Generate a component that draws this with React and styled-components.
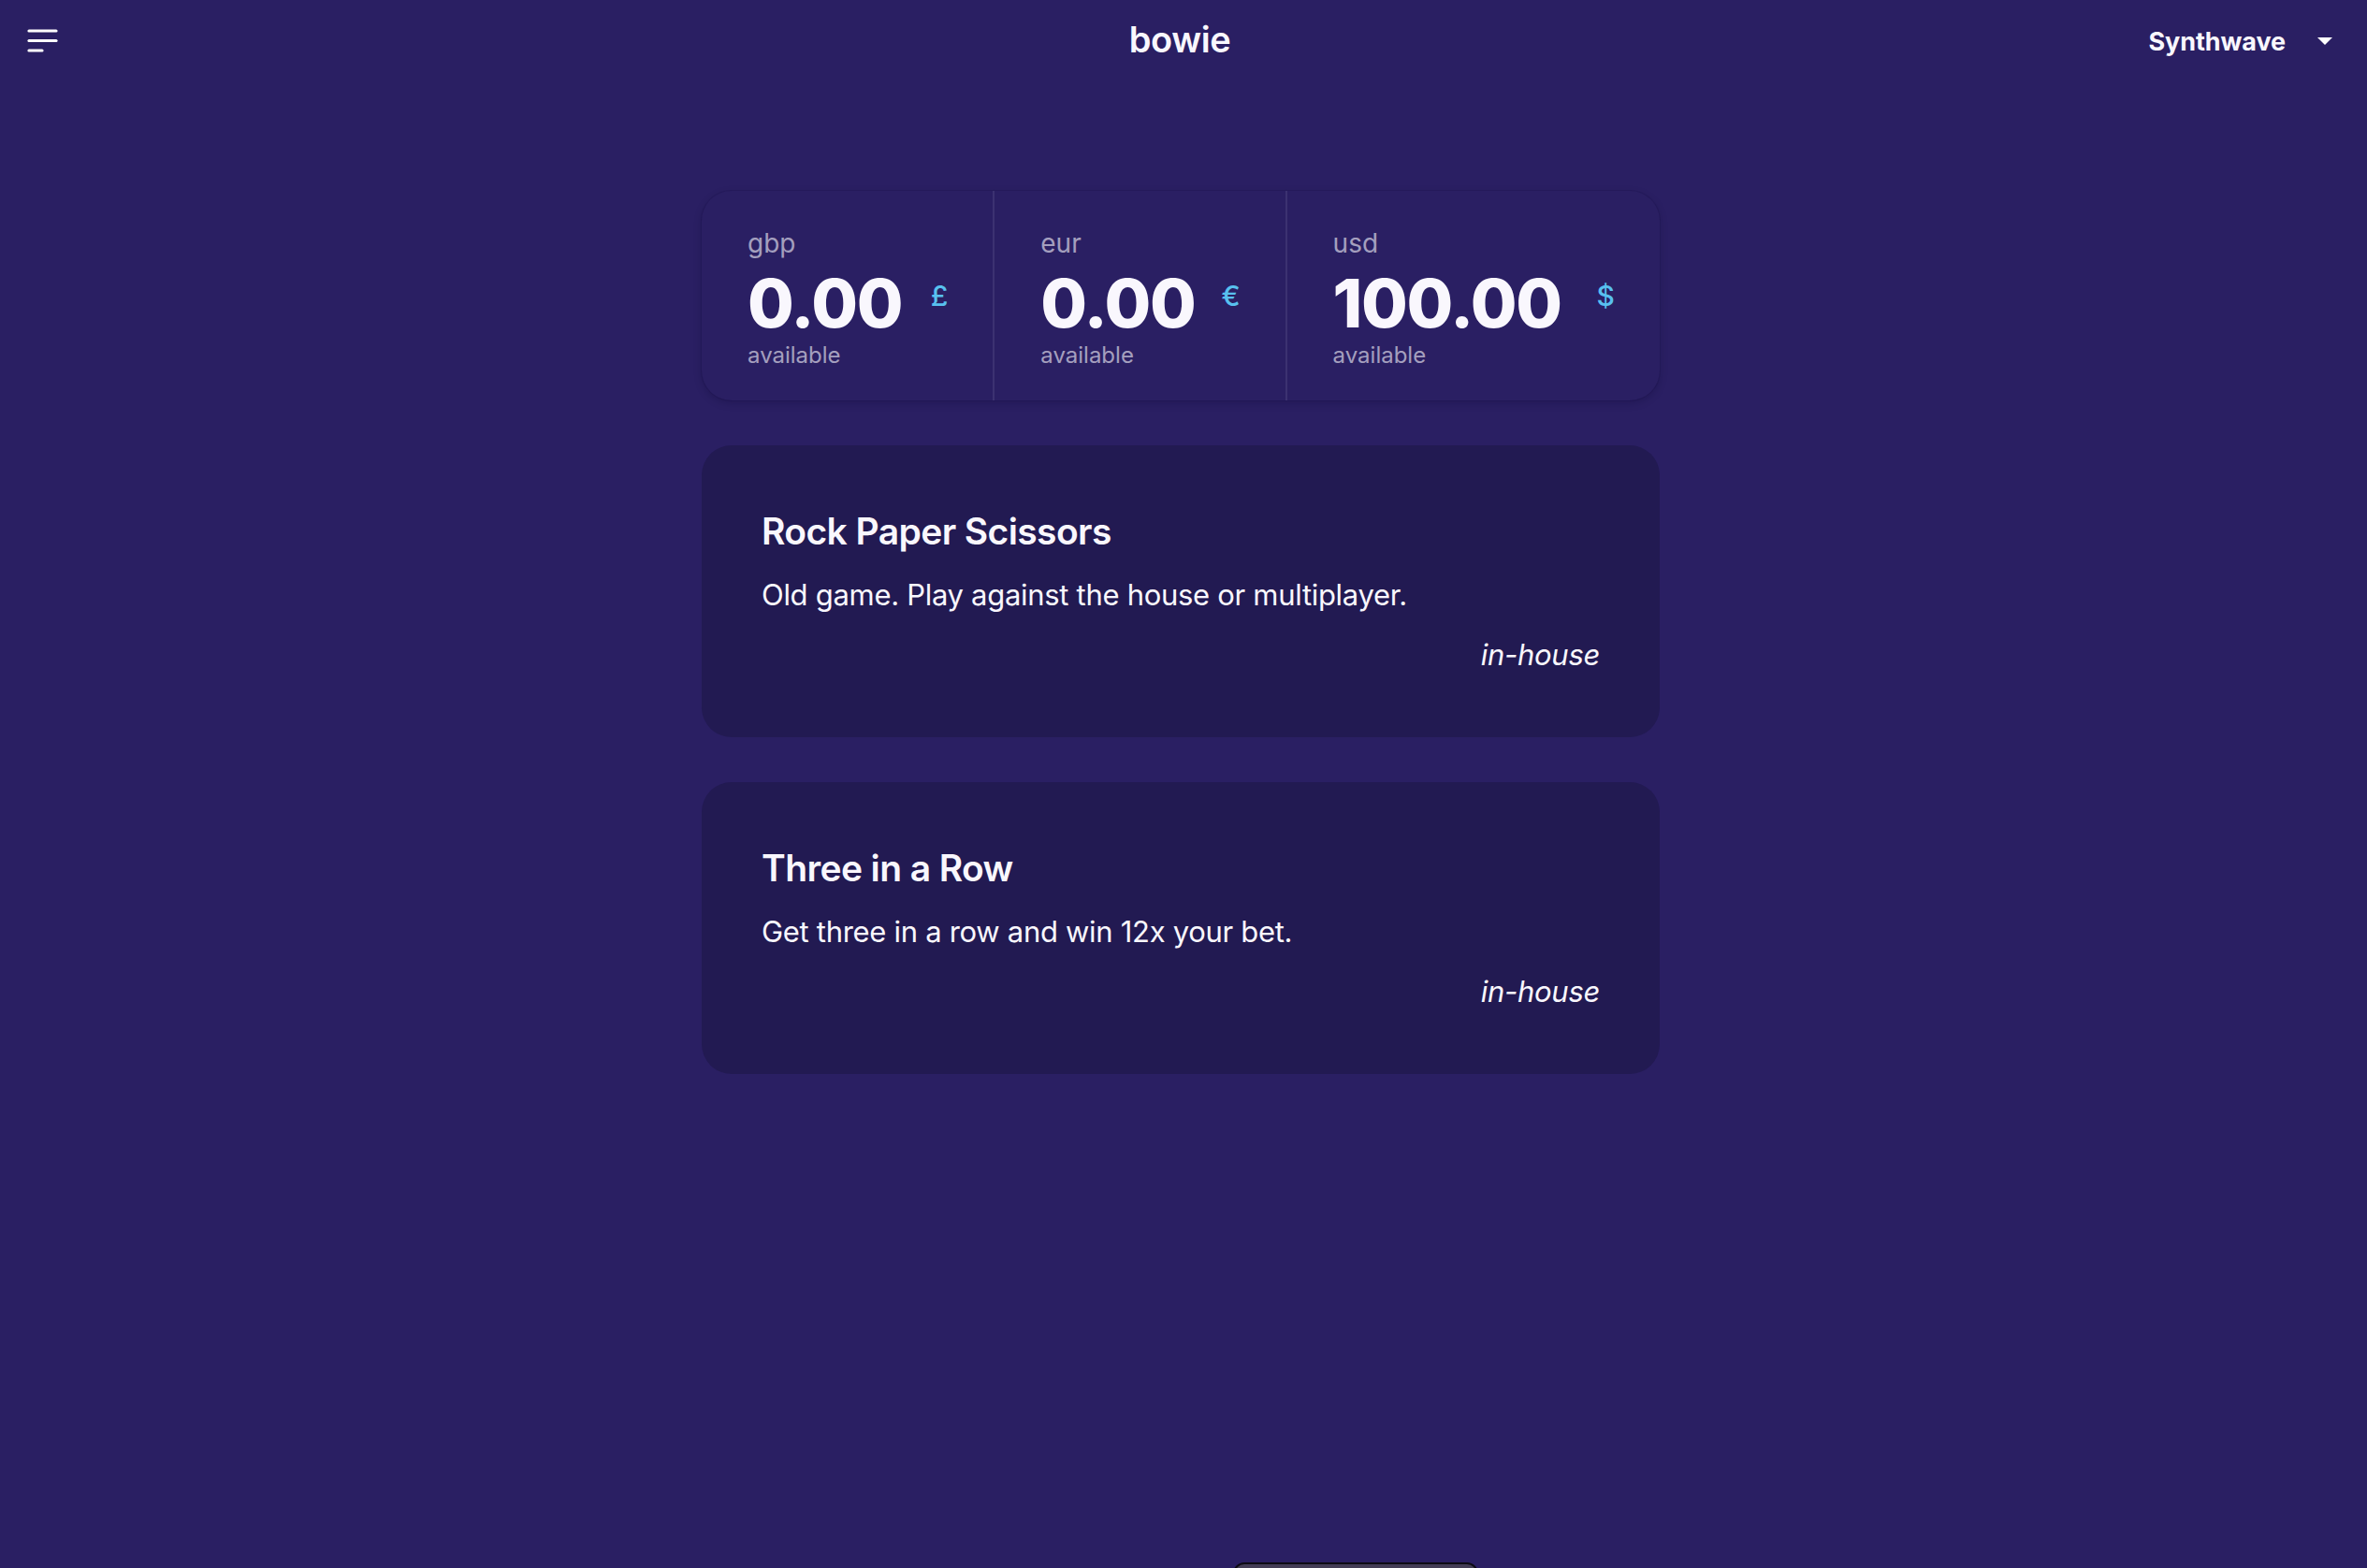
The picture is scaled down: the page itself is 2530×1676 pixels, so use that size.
import React from 'react';
import styled, { createGlobalStyle } from 'styled-components';

const GlobalStyle = createGlobalStyle`
  html, body {
    margin: 0;
    padding: 0;
    background: #2a1f63;
  }
  body {
    font-family: Inter, "Noto Sans", "Liberation Sans", sans-serif;
    color: #f9f7fd;
    min-height: 100vh;
  }
`;

const Page = styled.div`
  min-height: 100vh;
  background: #2a1f63;
`;

const Navbar = styled.header`
  display: flex;
  align-items: center;
  height: 88px;
  padding: 0 37px 0 29px;
`;

const NavSide = styled.div`
  flex: 1;
  display: flex;
  align-items: center;
  justify-content: ${(p) => (p.$end ? 'flex-end' : 'flex-start')};
`;

const MenuButton = styled.button`
  display: flex;
  align-items: center;
  background: none;
  border: none;
  padding: 0;
  cursor: pointer;
`;

const Brand = styled.div`
  font-size: 38px;
  font-weight: 600;
  letter-spacing: -0.4px;
  line-height: 1;
  margin-top: -4px;
`;

const ThemeSelect = styled.div`
  display: flex;
  align-items: center;
  gap: 34px;
  font-size: 27px;
  font-weight: 700;
  letter-spacing: -0.1px;
  cursor: pointer;
`;

const Main = styled.main`
  width: 1024px;
  margin: 116px 0 0 calc(50% - 515px);
  display: flex;
  flex-direction: column;
  gap: 48px;
`;

const Stats = styled.section`
  display: grid;
  grid-template-columns: minmax(0, 311fr) minmax(0, 312fr) minmax(0, 400fr);
  border-radius: 32px;
  box-shadow: 0 3px 8px rgba(10, 5, 40, 0.22), 0 0 0 1px rgba(20, 12, 60, 0.12);
`;

const Stat = styled.div`
  display: grid;
  grid-template-columns: 1fr auto;
  column-gap: 24px;
  padding: 32px 48px 32px 49px;
  border-left: ${(p) => (p.$first ? 'none' : '2px solid rgba(249, 247, 253, 0.09)')};
`;

const StatTitle = styled.div`
  grid-column: 1;
  font-size: 28px;
  line-height: 48px;
  color: rgba(249, 247, 253, 0.6);
`;

const StatValue = styled.div`
  grid-column: 1;
  font-size: 72px;
  line-height: 80px;
  font-weight: 800;
  letter-spacing: -1.3px;
  color: #f9f7fd;
  white-space: nowrap;
`;

const StatDesc = styled.div`
  grid-column: 1;
  font-size: 24px;
  line-height: 32px;
  color: rgba(249, 247, 253, 0.6);
`;

const StatFigure = styled.div`
  grid-column: 2;
  grid-row: 1 / span 3;
  align-self: center;
  justify-self: end;
  font-size: 30px;
  font-weight: 500;
  color: #58c0ef;
`;

const GameCard = styled.article`
  background: #221a52;
  border-radius: 32px;
  padding: 64px;
  display: flex;
  flex-direction: column;
  gap: 16px;
`;

const CardTitle = styled.h2`
  margin: 0;
  font-size: 39px;
  line-height: 56px;
  font-weight: 600;
  letter-spacing: -0.6px;
`;

const CardText = styled.p`
  margin: 0;
  font-size: 31px;
  line-height: 48px;
  letter-spacing: -0.3px;
`;

const CardActions = styled.div`
  display: flex;
  justify-content: flex-end;
  font-size: 31px;
  line-height: 48px;
  font-style: italic;
  letter-spacing: -0.3px;
`;

const BottomTab = styled.div`
  position: fixed;
  left: 1318px;
  bottom: -40px;
  width: 262px;
  height: 46px;
  background: #433d55;
  border: 2px solid #0d0b14;
  border-radius: 12px;
  box-sizing: border-box;
`;

const balances = [
  { code: 'gbp', amount: '0.00', symbol: '£' },
  { code: 'eur', amount: '0.00', symbol: '€' },
  { code: 'usd', amount: '100.00', symbol: '$' },
];

const games = [
  { title: 'Rock Paper Scissors', text: 'Old game. Play against the house or multiplayer.', tag: 'in-house' },
  { title: 'Three in a Row', text: 'Get three in a row and win 12x your bet.', tag: 'in-house' },
];

export default function App() {
  return (
    <Page>
      <GlobalStyle />
      <Navbar>
        <NavSide>
          <MenuButton aria-label="menu">
            <svg width="34" height="28" viewBox="0 0 34 28">
              <g stroke="#ffffff" strokeWidth="3.2" strokeLinecap="round">
                <line x1="2" y1="3" x2="31" y2="3" />
                <line x1="2" y1="13.5" x2="31" y2="13.5" />
                <line x1="2" y1="24" x2="16" y2="24" />
              </g>
            </svg>
          </MenuButton>
        </NavSide>
        <Brand>bowie</Brand>
        <NavSide $end>
          <ThemeSelect>
            Synthwave
            <svg width="16" height="8" viewBox="0 0 16 8">
              <path d="M0 0 L16 0 L8 8 Z" fill="#ffffff" />
            </svg>
          </ThemeSelect>
        </NavSide>
      </Navbar>

      <Main>
        <Stats>
          {balances.map((b, i) => (
            <Stat key={b.code} $first={i === 0}>
              <StatFigure>{b.symbol}</StatFigure>
              <StatTitle>{b.code}</StatTitle>
              <StatValue>{b.amount}</StatValue>
              <StatDesc>available</StatDesc>
            </Stat>
          ))}
        </Stats>

        {games.map((g) => (
          <GameCard key={g.title}>
            <CardTitle>{g.title}</CardTitle>
            <CardText>{g.text}</CardText>
            <CardActions>{g.tag}</CardActions>
          </GameCard>
        ))}
      </Main>
      <BottomTab />
    </Page>
  );
}
